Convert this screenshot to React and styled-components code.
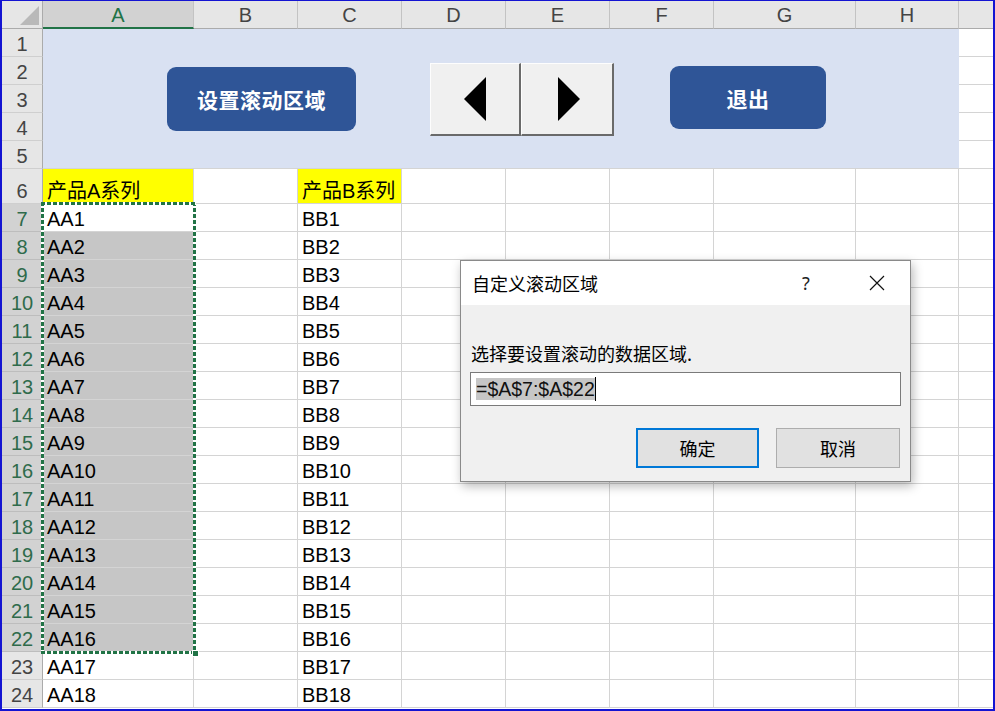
import React from 'react';
import styled, { createGlobalStyle } from 'styled-components';

const Global = createGlobalStyle`
  html, body { margin: 0; padding: 0; background: #fff; }
  body { font-family: "Liberation Sans", "Noto Sans CJK SC", sans-serif; }
`;

const GREEN = '#217346';
const GRID = '#d4d4d4';

const Frame = styled.div`
  position: relative;
  width: 995px;
  height: 711px;
  box-sizing: border-box;
  border-style: solid;
  border-color: #1414d2;
  border-width: 1px 2px 2px 2px;
  overflow: hidden;
  background: #fff;
`;

const Sheet = styled.div`
  display: grid;
  grid-template-columns: 41px 151px 104px 104px 104px 104px 104px 142px 103px 104px;
  grid-template-rows: 28px repeat(5, 28px) 35px repeat(19, 28px);
  font-size: 20px;
  color: #000;
`;

const Placed = styled.div`
  grid-row: ${p => p.$r};
  grid-column: ${p => p.$c};
  box-sizing: border-box;
`;

const Corner = styled(Placed)`
  background: #e6e6e6;
  border-right: 1px solid #ababab;
  border-bottom: 1px solid #ababab;
  display: flex;
  justify-content: flex-end;
  align-items: flex-end;
  padding: 0 3px 3px 0;
  &::after {
    content: '';
    width: 19px;
    height: 19px;
    background: #b9b9b9;
    clip-path: polygon(100% 0, 100% 100%, 0 100%);
  }
`;

const ColHead = styled(Placed)`
  background: ${p => (p.$sel ? '#d2d2d2' : '#e6e6e6')};
  color: ${p => (p.$sel ? GREEN : '#444')};
  border-right: 1px solid #c3c3c3;
  border-bottom: ${p => (p.$sel ? `2px solid ${GREEN}` : '1px solid #ababab')};
  display: flex;
  justify-content: center;
  align-items: flex-end;
  padding-bottom: ${p => (p.$sel ? '1px' : '2px')};
  line-height: 22px;
`;

const RowHead = styled(Placed)`
  background: ${p => (p.$sel ? '#d2d2d2' : '#e6e6e6')};
  color: ${p => (p.$sel ? '#2f6b4b' : '#444')};
  border-right: 1px solid #ababab;
  border-bottom: 1px solid ${p => (p.$sel ? '#bdbdbd' : '#cfcfcf')};
  display: flex;
  justify-content: center;
  align-items: flex-end;
  padding-bottom: 1px;
  line-height: 22px;
`;

const Cell = styled(Placed)`
  background: ${p => p.$bg || '#fff'};
  border-right: 1px solid ${GRID};
  border-bottom: 1px solid ${GRID};
  display: flex;
  align-items: flex-end;
  padding: 0 4px 1px 4px;
  line-height: 22px;
  white-space: nowrap;
  overflow: hidden;
`;

const Band = styled.div`
  grid-column: 2 / 10;
  grid-row: 2 / 7;
  box-sizing: border-box;
  background: #d9e1f2;
  border-bottom: 1px solid ${GRID};
  display: flex;
  align-items: flex-start;
  padding-left: 124px;
`;

const MacroButton = styled.div`
  box-sizing: border-box;
  width: ${p => p.$w}px;
  height: ${p => p.$h}px;
  margin-top: ${p => p.$top}px;
  margin-left: ${p => p.$left || 0}px;
  border-radius: 9px;
  background: #2f5597;
  color: #fff;
  font-family: "Noto Sans CJK SC", sans-serif;
  font-weight: 700;
  font-size: 21px;
  display: flex;
  align-items: center;
  justify-content: center;
  letter-spacing: 0.5px;
`;

const ArrowGroup = styled.div`
  display: flex;
  margin-top: 34px;
  margin-left: 74px;
`;

const ArrowButton = styled.div`
  box-sizing: border-box;
  width: ${p => p.$w}px;
  height: 73px;
  background: #f0f0f0;
  border-top: 1px solid #fdfdfd;
  border-left: 1px solid #fdfdfd;
  border-right: 2px solid #6a6a6a;
  border-bottom: 2px solid #6a6a6a;
  display: flex;
  align-items: center;
  justify-content: center;
  padding-left: ${p => p.$shift || 0}px;
`;

const Triangle = styled.div`
  width: 0;
  height: 0;
  border-top: 22px solid transparent;
  border-bottom: 22px solid transparent;
  ${p => (p.$dir === 'left' ? 'border-right: 22px solid #000;' : 'border-left: 22px solid #000;')}
`;

const Ants = styled.div`
  grid-column: 2;
  grid-row: 8 / 24;
  margin: -2px;
  position: relative;
  z-index: 2;
  pointer-events: none;
  background:
    repeating-linear-gradient(90deg, ${GREEN} 0 4px, #fff 4px 6px) left top / 100% 3px no-repeat,
    repeating-linear-gradient(90deg, ${GREEN} 0 4px, #fff 4px 6px) left bottom / 100% 3px no-repeat,
    repeating-linear-gradient(180deg, ${GREEN} 0 4px, #fff 4px 6px) left top / 3px 100% no-repeat,
    repeating-linear-gradient(180deg, ${GREEN} 0 4px, #fff 4px 6px) right top / 3px 100% no-repeat;
  &::after {
    content: '';
    position: absolute;
    right: -3px;
    bottom: -3px;
    width: 5px;
    height: 5px;
    background: ${GREEN};
    border: 1px solid #fff;
  }
`;

const Dialog = styled.div`
  position: absolute;
  left: 458px;
  top: 259px;
  width: 451px;
  height: 222px;
  box-sizing: border-box;
  border: 1px solid #8a8a8a;
  background: #f0f0f0;
  box-shadow: 2px 4px 10px rgba(0, 0, 0, 0.28);
  z-index: 5;
  font-family: "Noto Sans CJK SC", sans-serif;
  font-size: 18px;
  color: #000;
  display: flex;
  flex-direction: column;
`;

const TitleBar = styled.div`
  height: 44px;
  background: #fff;
  display: flex;
  align-items: center;
  padding-left: 11px;
`;

const Title = styled.div`
  flex: 1;
`;

const HelpBtn = styled.div`
  width: 46px;
  margin-right: 15px;
  text-align: center;
  font-family: "Noto Sans", sans-serif;
  font-size: 18px;
  color: #222;
`;

const CloseBtn = styled.div`
  width: 66px;
  height: 44px;
  display: flex;
  align-items: center;
  justify-content: center;
`;

const Body = styled.div`
  padding: 36px 9px 13px 9px;
  display: flex;
  flex-direction: column;
`;

const Label = styled.div`
  line-height: 24px;
  height: 24px;
  padding-left: 1px;
`;

const Input = styled.div`
  margin-top: 7px;
  height: 34px;
  box-sizing: border-box;
  border: 1px solid #7a7a7a;
  background: #fff;
  padding-left: 5px;
  display: flex;
  align-items: center;
`;

const Selected = styled.span`
  background: #c6c6c6;
  height: 22px;
  line-height: 22px;
  font-family: "Liberation Sans", sans-serif;
  font-size: 19.5px;
  color: #111;
`;

const Caret = styled.span`
  width: 1px;
  height: 24px;
  background: #000;
`;

const ButtonRow = styled.div`
  margin-top: 22px;
  display: flex;
  justify-content: flex-end;
  gap: 17px;
  padding-right: 1px;
`;

const DlgButton = styled.div`
  box-sizing: border-box;
  width: ${p => p.$w}px;
  height: 40px;
  background: #e1e1e1;
  border: ${p => (p.$primary ? '2px solid #0078d7' : '1px solid #adadad')};
  display: flex;
  align-items: center;
  justify-content: center;
  font-size: 18px;
`;

const COLS = ['A', 'B', 'C', 'D', 'E', 'F', 'G', 'H', ''];

function DataRow({ n }) {
  const r = n + 1;
  const i = n - 6;
  const inSel = n >= 7 && n <= 22;
  const aBg = n === 6 ? '#ffff00' : n >= 8 && n <= 22 ? '#c6c6c6' : undefined;
  const cBg = n === 6 ? '#ffff00' : undefined;
  const aText = n === 6 ? '产品A系列' : `AA${i}`;
  const cText = n === 6 ? '产品B系列' : `BB${i}`;
  return (
    <>
      <RowHead $r={r} $c={1} $sel={inSel}>{n}</RowHead>
      <Cell $r={r} $c={2} $bg={aBg}>{aText}</Cell>
      <Cell $r={r} $c={3} />
      <Cell $r={r} $c={4} $bg={cBg}>{cText}</Cell>
      {[5, 6, 7, 8, 9, 10].map(c => (
        <Cell key={c} $r={r} $c={c} />
      ))}
    </>
  );
}

export default function App() {
  const rows = [];
  for (let n = 6; n <= 24; n++) rows.push(<DataRow key={n} n={n} />);
  return (
    <Frame>
      <Global />
      <Sheet>
        <Corner $r={1} $c={1} />
        {COLS.map((c, k) => (
          <ColHead key={k} $r={1} $c={k + 2} $sel={c === 'A'}>{c}</ColHead>
        ))}
        {[1, 2, 3, 4, 5].map(n => (
          <React.Fragment key={n}>
            <RowHead $r={n + 1} $c={1}>{n}</RowHead>
            <Cell $r={n + 1} $c={10} />
          </React.Fragment>
        ))}
        <Band>
          <MacroButton $w={189} $h={64} $top={38}>设置滚动区域</MacroButton>
          <ArrowGroup>
            <ArrowButton $w={91}>
              <Triangle $dir="left" />
            </ArrowButton>
            <ArrowButton $w={93} $shift={4}>
              <Triangle $dir="right" />
            </ArrowButton>
          </ArrowGroup>
          <MacroButton $w={156} $h={63} $top={37} $left={56}>退出</MacroButton>
        </Band>
        {rows}
        <Ants />
      </Sheet>
      <Dialog>
        <TitleBar>
          <Title>自定义滚动区域</Title>
          <HelpBtn>?</HelpBtn>
          <CloseBtn>
            <svg width="16" height="16" viewBox="0 0 16 16">
              <path d="M1 1 L15 15 M15 1 L1 15" stroke="#111" strokeWidth="1.2" fill="none" />
            </svg>
          </CloseBtn>
        </TitleBar>
        <Body>
          <Label>选择要设置滚动的数据区域.</Label>
          <Input>
            <Selected>=$A$7:$A$22</Selected>
            <Caret />
          </Input>
          <ButtonRow>
            <DlgButton $w={123} $primary>确定</DlgButton>
            <DlgButton $w={124}>取消</DlgButton>
          </ButtonRow>
        </Body>
      </Dialog>
    </Frame>
  );
}
